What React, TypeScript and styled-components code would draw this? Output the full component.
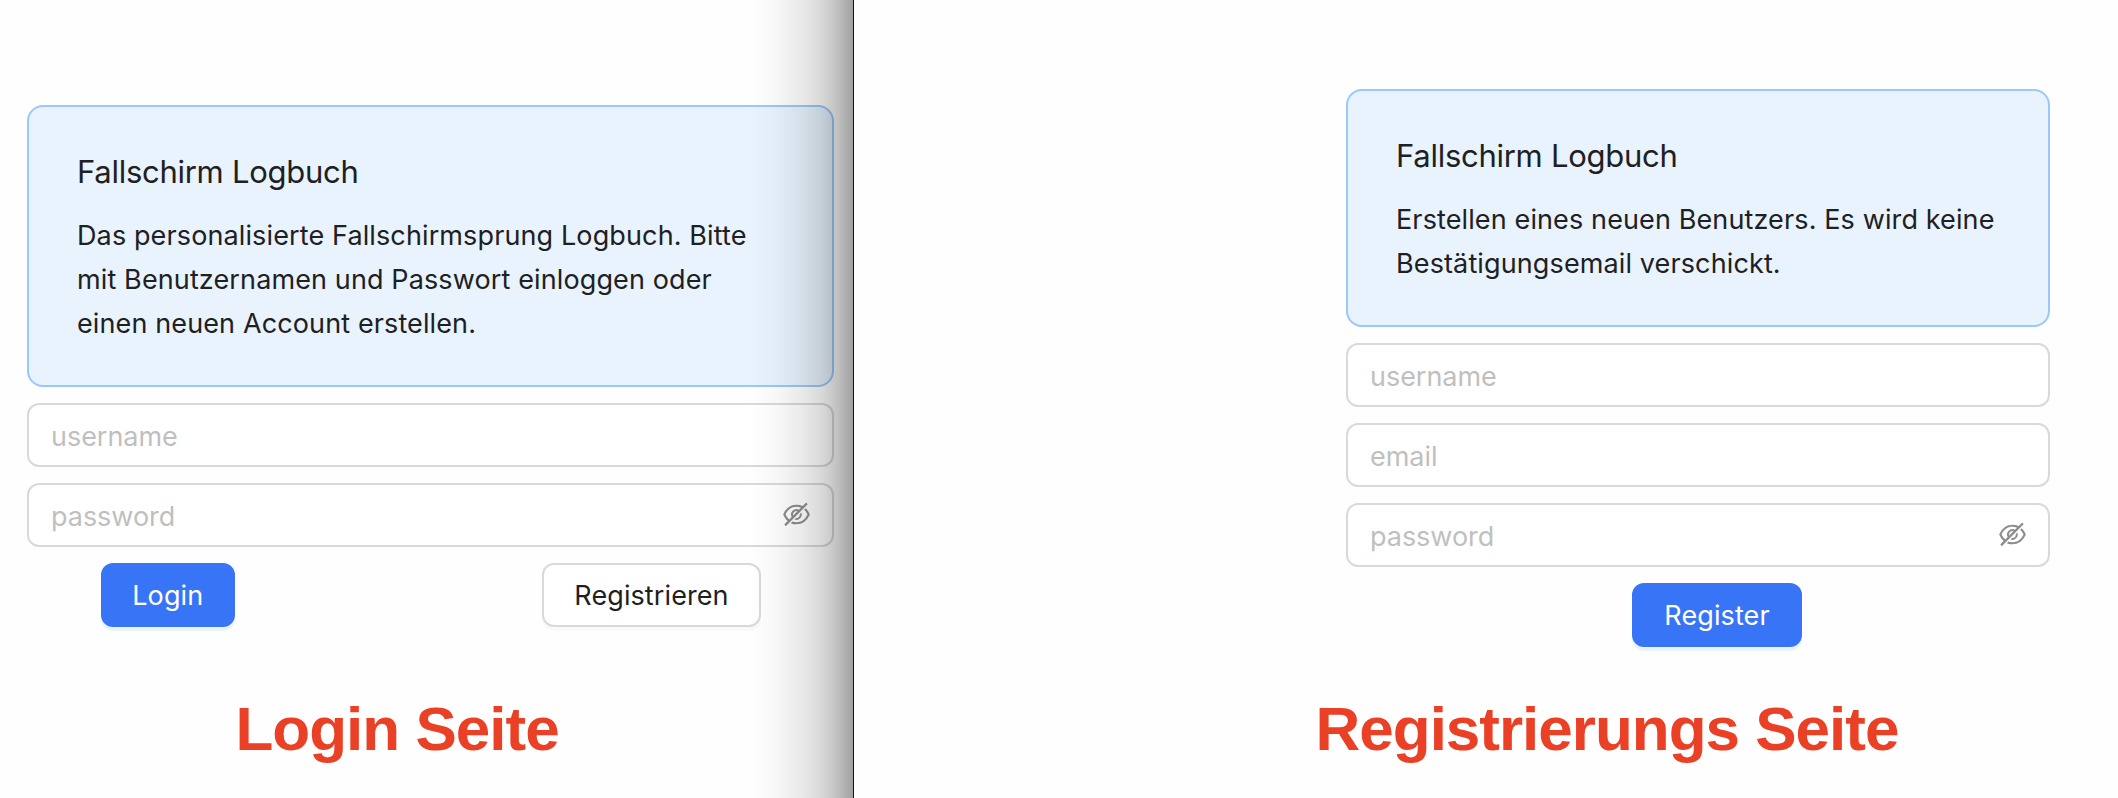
import React from "react";
import styled, { createGlobalStyle } from "styled-components";
import { AiOutlineEyeInvisible } from "react-icons/ai";

const GlobalStyle = createGlobalStyle`
  *, *::before, *::after { box-sizing: border-box; }
  body {
    margin: 0;
    background: #fefefe;
    color: #1e2022;
    font-family: Inter, "Liberation Sans", sans-serif;
    font-size: 27px;
    line-height: 44px;
  }
`;

const Screen = styled.main`
  display: flex;
  width: 2118px;
  height: 798px;
  overflow: hidden;
`;

const LoginPane = styled.section`
  position: relative;
  flex: none;
  width: 854px;
  padding: 105px 19px 0 27px;
  border-right: 1px solid #111;
`;

const EdgeShade = styled.div`
  position: absolute;
  top: 0;
  right: 0;
  bottom: 0;
  width: 105px;
  pointer-events: none;
  background: linear-gradient(
    to right,
    rgba(0, 0, 0, 0) 0%,
    rgba(0, 0, 0, 0.025) 25%,
    rgba(0, 0, 0, 0.08) 50%,
    rgba(0, 0, 0, 0.15) 70%,
    rgba(0, 0, 0, 0.24) 85%,
    rgba(0, 0, 0, 0.37) 100%
  );
`;

const RegisterPane = styled.section`
  flex: 1;
  padding: 89px 68px 0 492px;
`;

const Form = styled.form<{ $height: number }>`
  display: flex;
  flex-direction: column;
  gap: 16px;
  height: ${(p) => p.$height}px;
`;

const Notice = styled.div`
  padding: 40px 48px 39px;
  border: 2px solid #99c8fc;
  border-radius: 16px;
  background: #e8f3fe;
`;

const NoticeTitle = styled.h1`
  margin: 0 0 17px;
  font-size: 31px;
  font-weight: 400;
  line-height: 50px;
  letter-spacing: -0.27px;
`;

const NoticeText = styled.p`
  margin: 0;
  letter-spacing: 0.12px;
  white-space: nowrap;
`;

const Field = styled.label`
  display: flex;
  align-items: center;
  height: 64px;
  padding: 0 20px 0 22px;
  border: 2px solid #d9d9d9;
  border-radius: 12px;
  background: #fff;
`;

const Input = styled.input`
  flex: 1;
  min-width: 0;
  padding: 3px 0 0;
  border: 0;
  outline: 0;
  background: none;
  font: inherit;
  letter-spacing: -0.03px;
  &::placeholder { color: #bfbfbf; opacity: 1; }
`;

const HiddenIcon = styled(AiOutlineEyeInvisible)`
  flex: none;
  width: 31px;
  height: 31px;
  margin-bottom: 1px;
  color: rgba(0, 0, 0, 0.45);
`;

const Actions = styled.div<{ $inset: number }>`
  display: flex;
  justify-content: space-between;
  padding: 0 ${(p) => p.$inset}px 0 ${(p) => p.$inset + 1}px;
`;

const CenteredActions = styled.div`
  display: flex;
  justify-content: center;
  padding-left: 38px;
`;

const Button = styled.button<{ $primary?: boolean; $width: number }>`
  width: ${(p) => p.$width}px;
  height: 64px;
  padding: 1px 0 0;
  border: 2px solid ${(p) => (p.$primary ? "#3875f6" : "#d9d9d9")};
  border-radius: 12px;
  background: ${(p) => (p.$primary ? "#3875f6" : "#fff")};
  color: ${(p) => (p.$primary ? "#fff" : "#1f1f1f")};
  box-shadow: 0 4px 0 ${(p) => (p.$primary ? "#ebf4fe" : "rgba(0, 0, 0, 0.02)")};
  font: inherit;
  letter-spacing: 0.1px;
`;

const Caption = styled.h2<{ $indent: number }>`
  margin: 0 0 0 ${(p) => p.$indent}px;
  color: #ea4025;
  font: bold 62px/67px "Liberation Sans", Arial, sans-serif;
  letter-spacing: -1px;
  white-space: nowrap;
`;

function PasswordField() {
  return (
    <Field>
      <Input type="password" placeholder="password" />
      <HiddenIcon />
    </Field>
  );
}

export default function App() {
  return (
    <Screen>
      <GlobalStyle />
      <LoginPane>
        <Form $height={590}>
          <Notice>
            <NoticeTitle>Fallschirm Logbuch</NoticeTitle>
            <NoticeText>
              Das personalisierte Fallschirmsprung Logbuch. Bitte
              <br />
              mit Benutzernamen und Passwort einloggen oder
              <br />
              einen neuen Account erstellen.
            </NoticeText>
          </Notice>
          <Field>
            <Input placeholder="username" />
          </Field>
          <PasswordField />
          <Actions $inset={73}>
            <Button type="button" $primary $width={133.5}>Login</Button>
            <Button type="button" $width={219}>Registrieren</Button>
          </Actions>
        </Form>
        <Caption $indent={208.5}>Login Seite</Caption>
        <EdgeShade />
      </LoginPane>
      <RegisterPane>
        <Form $height={606}>
          <Notice>
            <NoticeTitle>Fallschirm Logbuch</NoticeTitle>
            <NoticeText>
              Erstellen eines neuen Benutzers. Es wird keine
              <br />
              Bestätigungsemail verschickt.
            </NoticeText>
          </Notice>
          <Field>
            <Input placeholder="username" />
          </Field>
          <Field>
            <Input placeholder="email" />
          </Field>
          <PasswordField />
          <CenteredActions>
            <Button type="button" $primary $width={170}>Register</Button>
          </CenteredActions>
        </Form>
        <Caption $indent={-30.5}>Registrierungs Seite</Caption>
      </RegisterPane>
    </Screen>
  );
}
